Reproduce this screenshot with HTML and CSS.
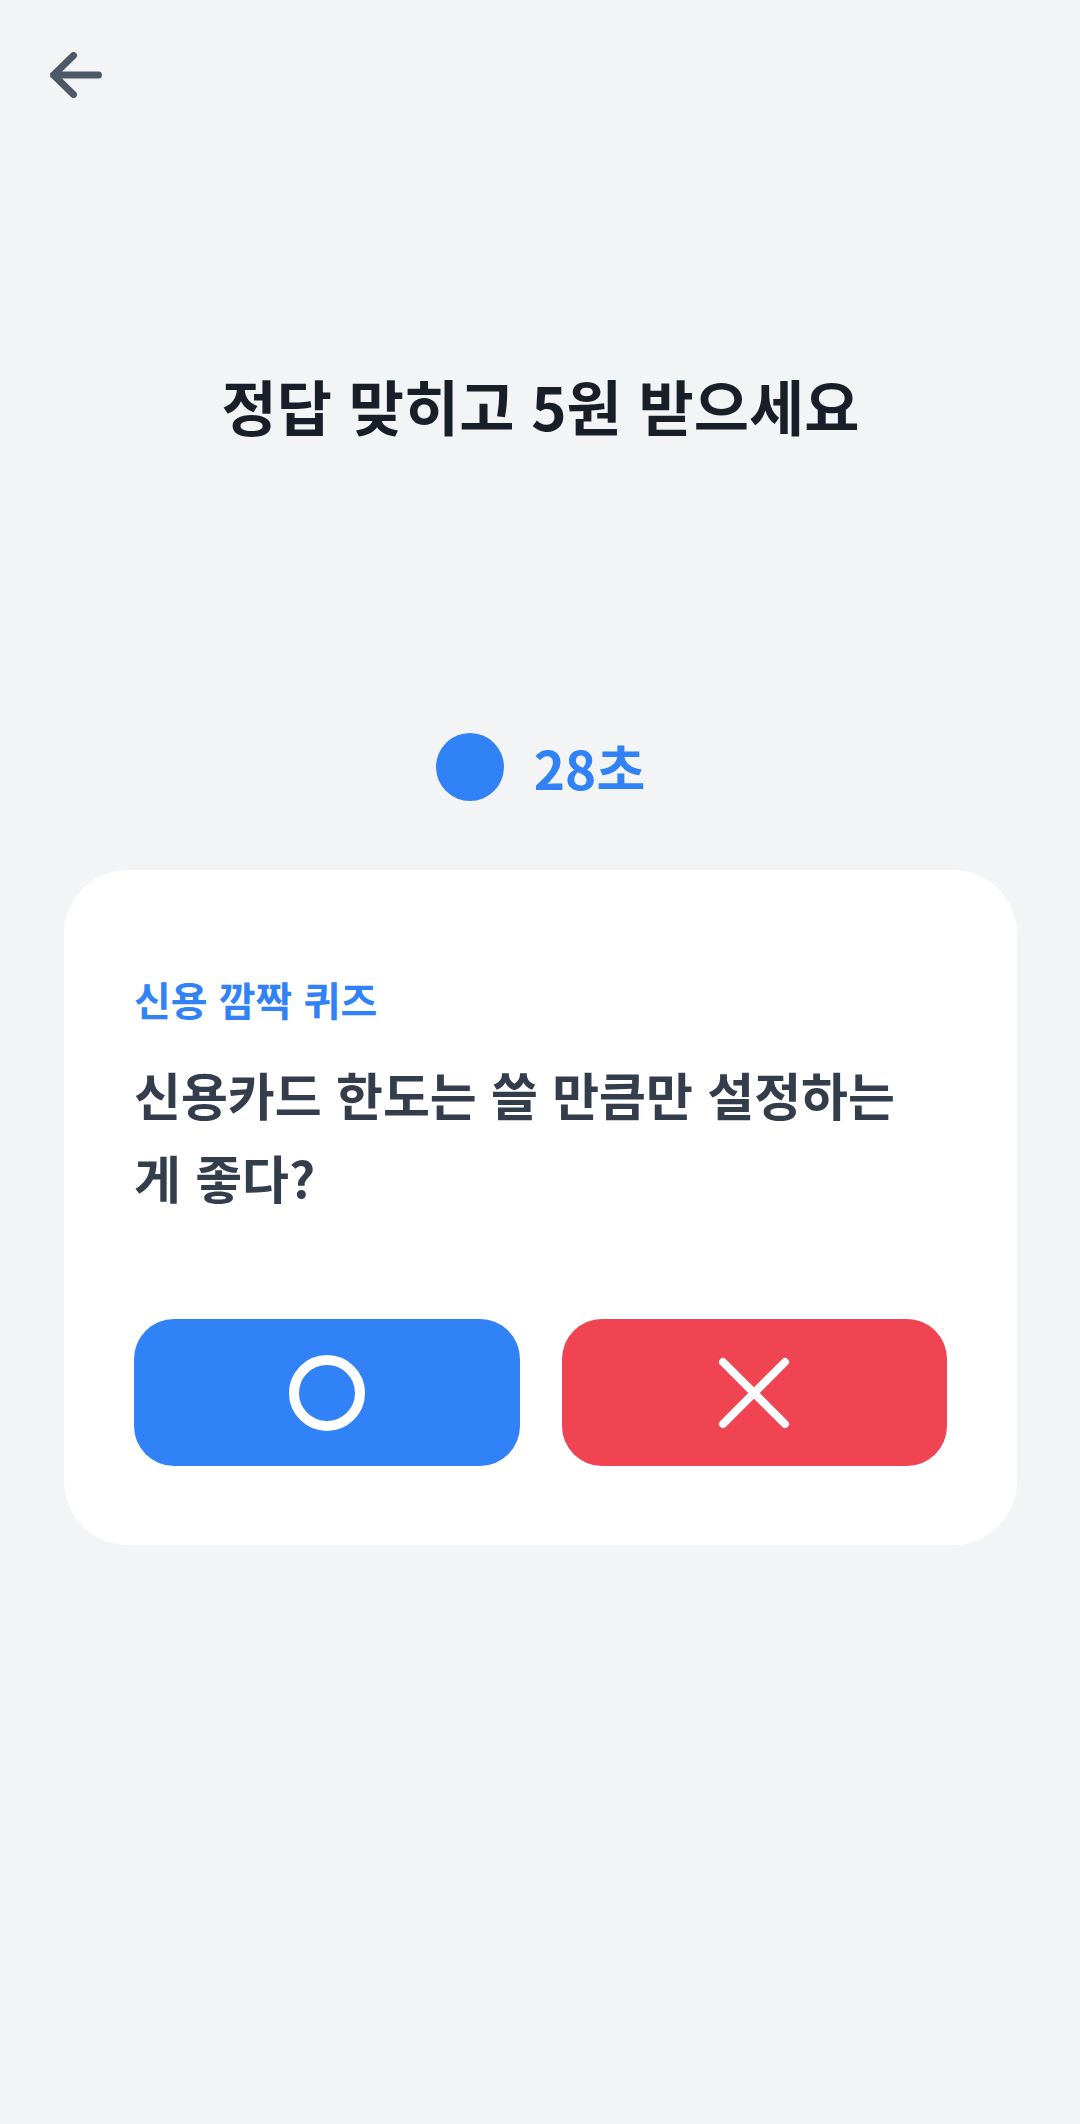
FILE: index.html
```html
<!DOCTYPE html>
<html lang="ko">
<head>
    <meta charset="UTF-8">
    <meta name="viewport" content="width=device-width, initial-scale=1.0">
    <title>신용 깜짝 퀴즈</title>
    <link rel="stylesheet" href="styles.css">
</head>
<body>
    <header class="top-bar">
        <button class="back-btn" type="button" aria-label="뒤로 가기">
            <svg width="52" height="46" viewBox="0 0 52 46">
                <path d="M3.5 23H48.5M23.5 3.5L3.5 23L23.5 42.5" fill="none" stroke="#4e5968" stroke-width="7" stroke-linecap="round" stroke-linejoin="round"/>
            </svg>
        </button>
    </header>

    <main class="quiz-page">
        <h1 class="title">정답 맞히고 5원 받으세요</h1>

        <div class="timer">
            <span class="timer-dot"></span>
            <span class="timer-text">28초</span>
        </div>

        <section class="quiz-card">
            <p class="quiz-label">신용 깜짝 퀴즈</p>
            <h2 class="quiz-question">신용카드 한도는 쓸 만큼만 설정하는 게 좋다?</h2>

            <div class="answers">
                <button class="answer answer-yes" type="button" aria-label="O">
                    <svg width="76" height="76" viewBox="0 0 76 76">
                        <circle cx="38" cy="38" r="33" fill="none" stroke="#fff" stroke-width="10"/>
                    </svg>
                </button>
                <button class="answer answer-no" type="button" aria-label="X">
                    <svg width="72" height="72" viewBox="0 0 72 72">
                        <path d="M5 5L67 67M67 5L5 67" fill="none" stroke="#fff" stroke-width="8" stroke-linecap="round"/>
                    </svg>
                </button>
            </div>
        </section>
    </main>
</body>
</html>
```

FILE: styles.css
```css
* {
    box-sizing: border-box;
    margin: 0;
    padding: 0;
}

body {
    font-family: 'Noto Sans CJK KR', 'Noto Sans', sans-serif;
    background: #f2f4f6;
    min-height: 100vh;
}

.top-bar {
    padding: 52px 0 0 50px;
}

.back-btn {
    display: block;
    border: none;
    background: none;
    cursor: pointer;
}

.back-btn svg {
    display: block;
}

.quiz-page {
    display: flex;
    flex-direction: column;
    align-items: center;
    padding: 0 63px 0 64px;
}

.title {
    margin-top: 270px;
    font-size: 60px;
    line-height: 73px;
    font-weight: 700;
    color: #191f28;
    text-align: center;
}

.timer {
    margin-top: 292px;
    display: flex;
    align-items: center;
    gap: 30px;
    height: 68px;
}

.timer-dot {
    width: 68px;
    height: 68px;
    border-radius: 50%;
    background: #3182f6;
}

.timer-text {
    font-size: 53px;
    font-weight: 700;
    color: #3182f6;
}

.quiz-card {
    margin-top: 69px;
    width: 100%;
    background: #fff;
    border-radius: 64px;
    padding: 103px 70px 79px;
}

.quiz-label {
    font-size: 40px;
    line-height: 53px;
    font-weight: 600;
    color: #3182f6;
}

.quiz-question {
    margin-top: 27px;
    font-size: 51px;
    line-height: 83px;
    font-weight: 700;
    color: #333d4b;
}

.answers {
    margin-top: 100px;
    display: grid;
    grid-template-columns: 1fr 1fr;
    gap: 42px;
}

.answer {
    height: 147px;
    border: none;
    border-radius: 40px;
    display: flex;
    align-items: center;
    justify-content: center;
    cursor: pointer;
}

.answer svg {
    display: block;
}

.answer-yes {
    background: #3182f6;
}

.answer-no {
    background: #f04452;
}
```
